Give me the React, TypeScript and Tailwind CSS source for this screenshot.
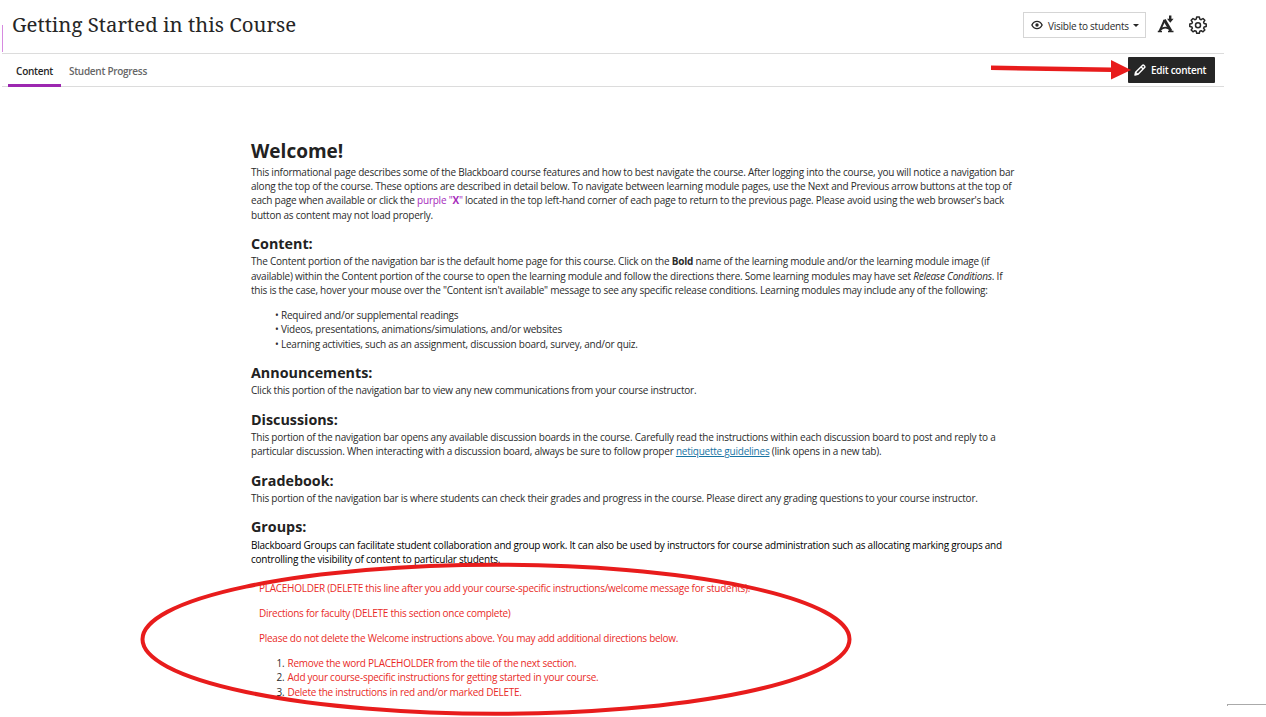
import React from 'react';

function EyeIcon() {
  return (
    <svg width="12" height="10" viewBox="0 0 12 10" fill="none" stroke="#262626" strokeWidth="1.4">
      <path d="M0.9 5C2 2.7 3.8 1.4 6 1.4S10 2.7 11.1 5C10 7.3 8.2 8.6 6 8.6S2 7.3 0.9 5Z" />
      <circle cx="6" cy="5" r="1.7" fill="#262626" stroke="none" />
    </svg>
  );
}

// accessibility score icon: an "A" with an arched bar and a down arrow
function AllyIcon() {
  return (
    <svg width="18" height="18" viewBox="0 0 18 18" fill="none" stroke="#262626">
      <path d="M7.6 5L2.6 16.200" strokeWidth="2" />
      <path d="M7.300 4.800L14 16" strokeWidth="3" />
      <path d="M3.500 14.500Q7.500 11.200 11.500 13.600" strokeWidth="1.800" />
      <path d="M0.800 16.400H5M11 16.400H16.500" strokeWidth="1.500" />
      <path d="M12 0.500H14.400V3.700H16.600L13.300 7.800L10 3.700H12Z" fill="#262626" stroke="none" />
    </svg>
  );
}

function GearIcon() {
  return (
    <svg width="18" height="18" viewBox="0 0 18 18" fill="none" stroke="#262626" strokeWidth="1.5" strokeLinejoin="round">
      <path d="M7.7 1H10.3L10.8 3.1L12.2 3.7L14 2.5L15.8 4.3L14.6 6.2L15.1 7.5L17.2 8V10.4L15.1 10.9L14.6 12.2L15.8 14L14 15.8L12.2 14.7L10.8 15.2L10.3 17.3H7.7L7.2 15.2L5.8 14.7L4 15.8L2.2 14L3.4 12.2L2.9 10.9L0.8 10.4V8L2.9 7.5L3.4 6.2L2.2 4.3L4 2.5L5.8 3.7L7.2 3.1Z" />
      <circle cx="9" cy="9.2" r="2.5" />
    </svg>
  );
}

function PencilIcon() {
  return (
    <svg width="12" height="12" viewBox="0 0 12 12" fill="none" stroke="white" strokeWidth="1.4" strokeLinejoin="round">
      <path d="M1 11L1.6 8.2L8.4 1.4Q9.1 0.7 9.9 1.4L10.6 2.1Q11.3 2.9 10.6 3.6L3.8 10.4ZM7 2.8L9.2 5M1.6 8.2L3.8 10.4" />
    </svg>
  );
}

function Section({ title, children }: { title: string; children: React.ReactNode }) {
  return (
    <section>
      <h2 className="mt-3 h-[20.4px] text-[14.3px] leading-5 font-bold tracking-normal text-[#222]">{title}</h2>
      {children}
    </section>
  );
}

const readings = [
  'Required and/or supplemental readings',
  'Videos, presentations, animations/simulations, and/or websites',
  'Learning activities, such as an assignment, discussion board, survey, and/or quiz.',
];

const steps = [
  'Remove the word PLACEHOLDER from the tile of the next section.',
  'Add your course-specific instructions for getting started in your course.',
  'Delete the instructions in red and/or marked DELETE.',
];

export default function App() {
  return (
    <div className="relative h-[717px] w-[1266px] overflow-hidden bg-white font-['Open_Sans','Noto_Sans',sans-serif] text-[10px] text-[#2b2b2b]">
      <div className="ml-0.5 w-[1222px]">
        <header className="flex h-[54px] items-center justify-between border-b border-[#dcdcdc] pr-[17px]">
          <div className="flex items-center">
            <div className="mt-[23px] h-[27px] w-px bg-[#d68ae0]" />
            <h1 className="ml-[9px] pb-1 font-['Noto_Serif','DejaVu_Serif',serif] text-[20.4px] whitespace-nowrap text-[#262626]">
              Getting Started in this Course
            </h1>
          </div>
          <div className="flex items-center pb-[3px]">
            <button className="flex h-[26px] w-[123px] items-center border border-[#d5d5d5] pl-[7px] tracking-[-0.25px] whitespace-nowrap">
              <EyeIcon />
              <span className="mt-0.5 ml-[5px]">Visible to students</span>
              <span className="ml-1 shrink-0 border-x-[3px] border-t-[3px] border-x-transparent border-t-[#262626]" />
            </button>
            <span className="ml-[11px] pb-0.5"><AllyIcon /></span>
            <span className="ml-[14px] pb-px"><GearIcon /></span>
          </div>
        </header>

        <nav className="flex h-[33px] justify-between border-b border-[#dcdcdc] pr-[9px] pl-1.5 font-semibold tracking-[-0.29px]">
          <div className="flex">
            <a className="flex h-[33px] w-[53px] items-center justify-center border-b-[3px] border-[#9c27b0] pt-1 text-[#262626]">Content</a>
            <a className="ml-2 flex h-[33px] items-center pt-px text-[#666]">Student Progress</a>
          </div>
          <button className="mt-[3px] flex h-[26px] w-[87px] items-center rounded-[1px] bg-[#262626] pl-1.5 whitespace-nowrap text-white">
            <PencilIcon />
            <span className="mt-px ml-[5px]">Edit content</span>
          </button>
        </nav>
      </div>

      <main className="mt-[53.5px] ml-[251px] leading-[14.3px] tracking-[-0.232px] whitespace-nowrap">
        <h1 className="h-[24.3px] text-[19px] leading-[21px] font-bold tracking-normal text-[#222]">Welcome!</h1>
        <p>
          This informational page describes some of the Blackboard course features and how to best navigate the course. After logging into the course, you will notice a navigation bar<br />
          along the top of the course. These options are described in detail below. To navigate between learning module pages, use the Next and Previous arrow buttons at the top of<br />
          each page when available or click the <span className="text-[#a62bbb]">purple "<b>X</b>"</span> located in the top left-hand corner of each page to return to the previous page. Please avoid using the web browser's back<br />
          button as content may not load properly.
        </p>

        <Section title="Content:">
          <p>
            The Content portion of the navigation bar is the default home page for this course. Click on the <b>Bold</b> name of the learning module and/or the learning module image (if<br />
            available) within the Content portion of the course to open the learning module and follow the directions there. Some learning modules may have set <i>Release Conditions</i>. If<br />
            this is the case, hover your mouse over the "Content isn't available" message to see any specific release conditions. Learning modules may include any of the following:
          </p>
          <ul className="mt-[10.7px] ml-6">
            {readings.map((item) => (
              <li key={item} className="flex">
                <span className="w-1.5">•</span>
                {item}
              </li>
            ))}
          </ul>
        </Section>

        <Section title="Announcements:">
          <p>Click this portion of the navigation bar to view any new communications from your course instructor.</p>
        </Section>

        <Section title="Discussions:">
          <p>
            This portion of the navigation bar opens any available discussion boards in the course. Carefully read the instructions within each discussion board to post and reply to a<br />
            particular discussion. When interacting with a discussion board, always be sure to follow proper <a className="text-[#1874a4] underline">netiquette guidelines</a> (link opens in a new tab).
          </p>
        </Section>

        <Section title="Gradebook:">
          <p>This portion of the navigation bar is where students can check their grades and progress in the course. Please direct any grading questions to your course instructor.</p>
        </Section>

        <Section title="Groups:">
          <p className="text-black">
            Blackboard Groups can facilitate student collaboration and group work. It can also be used by instructors for course administration such as allocating marking groups and<br />
            controlling the visibility of content to particular students.
          </p>
        </Section>

        <div className="mt-[15px] ml-2 flex flex-col gap-[10.7px] tracking-[-0.265px] text-[#e92b27]">
          <p>PLACEHOLDER (DELETE this line after you add your course-specific instructions/welcome message for students).</p>
          <p>Directions for faculty (DELETE this section once complete)</p>
          <p>Please do not delete the Welcome instructions above. You may add additional directions below.</p>
          <ol className="ml-[17.5px]">
            {steps.map((step, i) => (
              <li key={step} className="flex">
                <span className="w-[11px] text-[#2b2b2b]">{i + 1}.</span>
                {step}
              </li>
            ))}
          </ol>
        </div>
      </main>

      {/* annotations drawn over the page */}
      <svg className="pointer-events-none absolute inset-0" width="1266" height="717" viewBox="0 0 1266 717">
        <path d="M991 65.5L1111 67.5V60L1131 70L1111 79.5V72L991 70Z" fill="#e81c1c" />
        <ellipse cx="496" cy="639.3" rx="353.5" ry="74.5" fill="none" stroke="#e81c1c" strokeWidth="4" />
      </svg>
      <div className="absolute top-[704px] right-0 h-0.5 w-[39px] border-t border-l border-[#aaa]" />
    </div>
  );
}
